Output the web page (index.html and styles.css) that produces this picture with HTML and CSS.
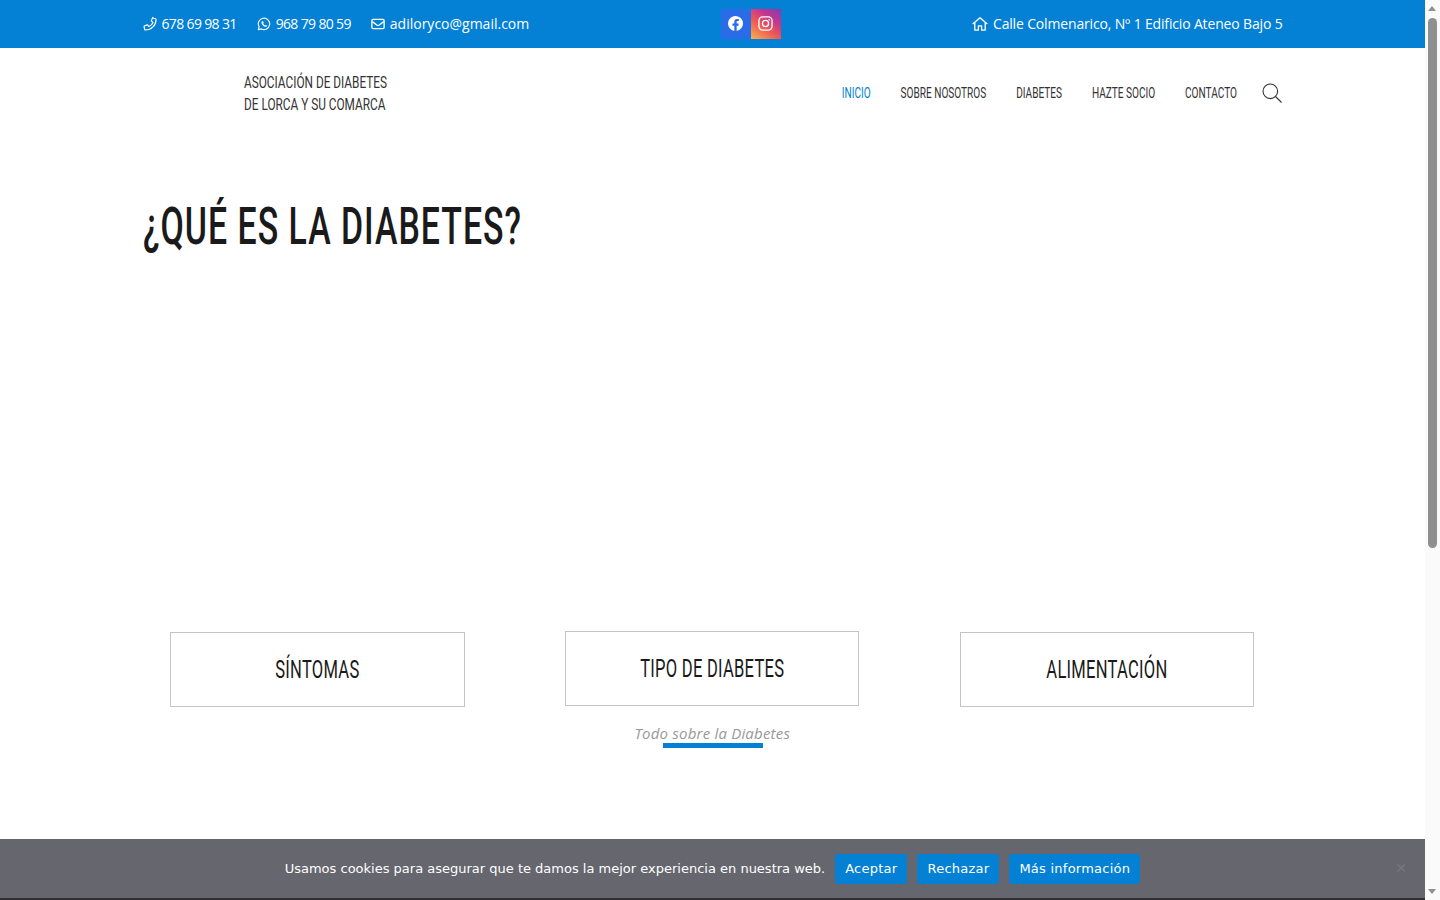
FILE: index.html
```html
<!DOCTYPE html>
<html lang="es">
<head>
    <meta charset="UTF-8">
    <meta name="viewport" content="width=device-width, initial-scale=1.0">
    <title>Asociación de Diabetes de Lorca y su Comarca</title>
    <link rel="stylesheet" href="styles.css">
</head>
<body>
    <div class="topbar">
        <div class="container topbar-inner">
            <div class="contact-list">
                <span class="contact num">
                    <svg class="ico" viewBox="0 0 16 16"><path d="M11.2 1.200 14.300 2c.4.100.6.400.6.800C14.900 9.500 9.500 14.900 2.800 14.900c-.4 0-.7-.2-.8-.6l-.8-3.100c-.1-.4.100-.7.400-.9l3-1.300c.3-.1.700 0 .9.300l1.300 1.600c2-1 3.700-2.700 4.700-4.700L9.900 4.900c-.3-.2-.4-.6-.3-.9l1.300-3c.1-.3.300-.4.300-.8z" fill="none" stroke="#fff" stroke-width="1.300" stroke-linejoin="round"/></svg>
                    678 69 98 31
                </span>
                <span class="contact num">
                    <svg class="ico" viewBox="0 0 16 16"><path d="M1.500 14.500 2.400 11.200A6.500 6.500 0 1 1 4.900 13.600z" fill="none" stroke="#fff" stroke-width="1.300" stroke-linejoin="round"/><path d="M5.800 4.900c-.9.700-.9 1.900 0 3.300 1 1.500 2.400 2.700 3.700 3 1.100.2 1.900-.3 2.200-1.200l-1.600-1-.8.800c-1-.4-1.800-1.200-2.300-2.300l.7-.8-.8-1.800z" fill="#fff"/></svg>
                    968 79 80 59
                </span>
                <span class="contact">
                    <svg class="ico" viewBox="0 0 16 16"><rect x="1" y="2.800" width="14" height="10.400" rx="1.300" fill="none" stroke="#fff" stroke-width="1.500"/><path d="M1.500 5.300 6.600 9.200c.9.600 1.900.6 2.800 0l5.100-3.900" fill="none" stroke="#fff" stroke-width="1.500"/></svg>
                    adiloryco@gmail.com
                </span>
            </div>
            <div class="social">
                <a class="social-btn fb" href="#">
                    <svg viewBox="0 0 16 16" width="15" height="15"><path fill="#fff" d="M16 8a8 8 0 1 0-9.250 7.900v-5.590H4.720V8h2.030V6.240c0-2 1.190-3.110 3.020-3.110.87 0 1.790.16 1.790.16v1.970h-1.010c-.99 0-1.300.62-1.300 1.250V8h2.220l-.35 2.310H9.250v5.590A8 8 0 0 0 16 8z"/></svg>
                </a>
                <a class="social-btn ig" href="#">
                    <svg viewBox="0 0 16 16" width="15" height="15" fill="none" stroke="#fff" stroke-width="1.400"><rect x="1" y="1" width="14" height="14" rx="4"/><circle cx="8" cy="8" r="3.300"/><circle cx="12" cy="4" r=".6" fill="#fff" stroke-width=".5"/></svg>
                </a>
            </div>
            <span class="contact address">
                <svg class="ico home" viewBox="0 0 16 16"><path d="M.7 8 8 1.800 15.300 8M2.800 6.500v7.700h3.600V9.800h3.200v4.400h3.600V6.500" fill="none" stroke="#fff" stroke-width="1.300" stroke-linejoin="round"/></svg>
                Calle Colmenarico, Nº 1 Edificio Ateneo Bajo 5
            </span>
        </div>
    </div>

    <header class="container site-header">
        <a class="brand" href="#"><span class="brand-text">ASOCIACIÓN DE DIABETES<br>DE LORCA Y SU COMARCA</span></a>
        <nav class="menu">
            <div class="menu-links">
                <a class="active" href="#">INICIO</a>
                <a href="#">SOBRE NOSOTROS</a>
                <a href="#">DIABETES</a>
                <a href="#">HAZTE SOCIO</a>
                <a href="#">CONTACTO</a>
            </div>
            <svg class="search" viewBox="0 0 20 20" width="20" height="20"><circle cx="8.300" cy="8.300" r="7.300" fill="none" stroke="#333" stroke-width="1.100"/><path d="M13.500 13.500 19.500 19.500" stroke="#333" stroke-width="1.100"/></svg>
        </nav>
    </header>

    <main class="container">
        <h1 class="page-title"><span class="page-title-text">¿QUÉ ES LA DIABETES?</span></h1>
        <div class="cards">
            <a class="card" href="#"><span class="card-text">SÍNTOMAS</span></a>
            <div class="card-col">
                <a class="card" href="#"><span class="card-text">TIPO DE DIABETES</span></a>
                <p class="tagline">Todo sobre la Diabetes</p>
                <div class="tagline-bar"></div>
            </div>
            <a class="card" href="#"><span class="card-text">ALIMENTACIÓN</span></a>
        </div>
    </main>

    <div class="cookie-bar">
        <span class="cookie-text">Usamos cookies para asegurar que te damos la mejor experiencia en nuestra web.</span>
        <a class="cookie-btn" href="#">Aceptar</a>
        <a class="cookie-btn" href="#">Rechazar</a>
        <a class="cookie-btn" href="#">Más información</a>
        <span class="cookie-close">✕</span>
    </div>

    <div class="scrollbar">
        <span class="arrow-up"></span>
        <span class="thumb"></span>
        <span class="arrow-down"></span>
    </div>
</body>
</html>
```

FILE: styles.css
```css
body, html {
    margin: 0;
    color: #222;
    background-color: #fff;
}

body {
    margin-right: 15px;
    font-family: 'Open Sans', Roboto, sans-serif;
}

a {
    color: inherit;
    text-decoration: none;
}

.container {
    width: 1140px;
    margin: 0 auto;
}

/* top bar */
.topbar {
    height: 48px;
    background-color: #0480d4;
    color: #fff;
    font-size: 14px;
}

.topbar-inner {
    height: 100%;
    display: flex;
    justify-content: space-between;
    align-items: center;
}

.contact-list {
    display: flex;
    gap: 20px;
}

.contact {
    display: inline-flex;
    align-items: center;
    gap: 5px;
    line-height: 18px;
}

.num {
    letter-spacing: -0.65px;
}

.address {
    letter-spacing: -0.16px;
}

.ico {
    width: 14px;
    height: 14px;
}

.home {
    width: 16px;
    height: 16px;
}

.social {
    display: flex;
    margin-top: -1px;
}

.social-btn {
    width: 30px;
    height: 30px;
    display: flex;
    align-items: center;
    justify-content: center;
}

.fb {
    background-color: #2a6ce8;
}

.ig {
    background: linear-gradient(35deg, #f9b24e 0%, #ee5a55 40%, #c2358f 70%, #7b3fb5 100%);
}

/* header */
.site-header {
    height: 90px;
    display: flex;
    align-items: center;
    justify-content: space-between;
}

.brand {
    margin-left: 101px;
    font-family: Roboto, sans-serif;
    font-size: 17px;
    line-height: 22px;
    color: #333;
}

/* no Oswald here, so Roboto gets squeezed */
.brand-text {
    display: inline-block;
    white-space: nowrap;
    transform: scaleX(.695);
    transform-origin: left;
}

.menu {
    display: flex;
    align-items: center;
    gap: 25px;
}

.menu-links {
    display: flex;
    gap: 46px;
    font-family: Roboto, sans-serif;
    font-size: 15.500px;
    color: #333;
    white-space: nowrap;
    transform: scaleX(.65);
    transform-origin: right;
}

.menu .active {
    color: #0480d4;
}

.search {
    margin-right: 1px;
}

/* content */
.page-title {
    margin: 0;
    padding-top: 54px;
    font-family: Roboto, sans-serif;
    font-weight: 500;
    font-size: 51px;
    letter-spacing: 1.500px;
    line-height: 70px;
    color: #1a1a1a;
}

.page-title-text {
    display: inline-block;
    transform: scaleX(.664);
    transform-origin: left;
}

.cards {
    display: grid;
    grid-template-columns: repeat(3, 1fr);
    gap: 100.500px;
    padding: 0 28.250px 0 27.750px;
    margin-top: 369px;
    align-items: start;
}

.card {
    height: 71px;
    padding-bottom: 2px;
    margin-top: 1px;
    border: 1px solid #c4c4c4;
    display: flex;
    align-items: center;
    justify-content: center;
    font-family: Roboto, sans-serif;
    font-size: 26.500px;
    letter-spacing: .4px;
    color: #1a1a1a;
}

.card-text {
    white-space: nowrap;
    transform: scaleX(.625);
}

.card-col .card {
    margin-top: 0;
}

.tagline {
    margin: 17px 0 0;
    text-align: center;
    font-style: italic;
    font-size: 15px;
    letter-spacing: .2px;
    line-height: 20px;
    color: #999;
}

.tagline-bar {
    width: 100px;
    height: 5px;
    margin-left: 98px;
    background-color: #0480d4;
}

/* cookie notice */
.cookie-bar {
    position: fixed;
    left: 0;
    right: 15px;
    bottom: 0;
    height: 59px;
    border-bottom: 2px solid #2e2e33;
    background-color: #66666e;
    color: #fff;
    font-family: 'DejaVu Sans', sans-serif;
    font-size: 13px;
    display: flex;
    align-items: center;
    justify-content: center;
    gap: 10px;
}

.cookie-btn {
    height: 30px;
    padding: 0 10px;
    display: flex;
    align-items: center;
    letter-spacing: .25px;
    background-color: #0480d4;
    border-radius: 3px;
}

.cookie-close {
    position: absolute;
    right: 18px;
    top: 21px;
    color: #77777e;
    font-size: 14px;
}

/* browser scrollbar */
.scrollbar {
    position: fixed;
    top: 0;
    right: 0;
    bottom: 0;
    width: 15px;
    background-color: #fafafa;
}

.thumb {
    position: absolute;
    top: 18px;
    left: 3px;
    width: 9px;
    height: 530px;
    border-radius: 5px;
    background-color: #8f8f8f;
}

.arrow-up, .arrow-down {
    position: absolute;
    left: 3px;
    width: 0;
    height: 0;
    border-left: 4.500px solid transparent;
    border-right: 4.500px solid transparent;
}

.arrow-up {
    top: 6px;
    border-bottom: 5px solid #8f8f8f;
}

.arrow-down {
    bottom: 6px;
    border-top: 5px solid #8f8f8f;
}
```
